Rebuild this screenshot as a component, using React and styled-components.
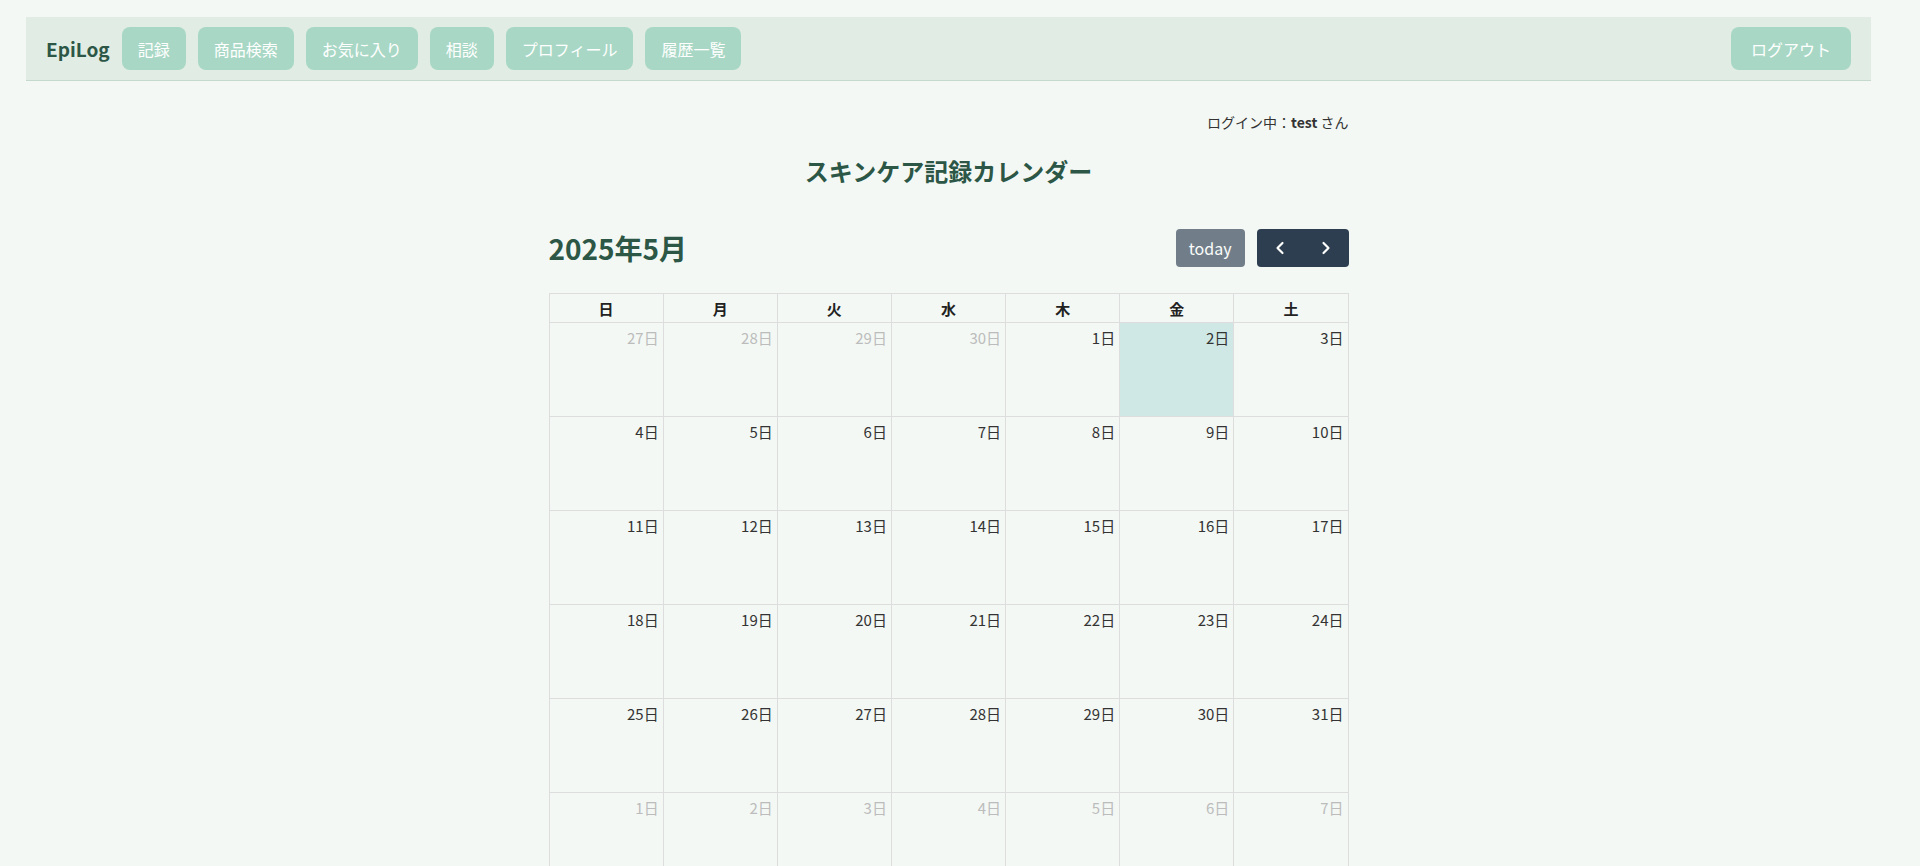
import React from "react";
import styled, { createGlobalStyle } from "styled-components";
import { ChevronLeft, ChevronRight } from "lucide-react";

const GlobalStyle = createGlobalStyle`
  html, body {
    margin: 0;
    padding: 0;
    background: #f3f8f4;
  }
  body {
    font-family: "Noto Sans CJK JP", "Noto Sans", sans-serif;
    color: #333;
  }
`

const Page = styled.div`
  padding: 17px 0 0 26px;
`

const Shell = styled.div`
  width: 1845px;
`

const Nav = styled.nav`
  height: 63px;
  display: flex;
  align-items: center;
  gap: 12px;
  padding: 0 20px;
  background: #e0ece4;
  border-bottom: 1px solid #c6d9cf;
`

const Logo = styled.div`
  font-size: 19px;
  font-weight: 700;
  color: #2c5645;
`

const NavButton = styled.button`
  font-family: inherit;
  font-size: 16px;
  line-height: 24px;
  padding: 9.5px ${(p) => (p.$push ? "20px" : "16px")};
  border: none;
  border-radius: 8px;
  background: #a8d8c5;
  color: #fff;
  cursor: pointer;
  margin-left: ${(p) => (p.$push ? "auto" : "0")};
`

const Main = styled.main`
  width: 800px;
  margin: 0 auto;
  padding-top: 31px;
`

const LoginInfo = styled.div`
  text-align: right;
  font-size: 14px;
  line-height: 20px;
  color: #333;

  b {
    font-weight: 700;
  }
`

const PageTitle = styled.h2`
  margin: 21px 0 0;
  text-align: center;
  font-size: 24px;
  line-height: 36px;
  font-weight: 700;
  color: #2c5645;
`

const Toolbar = styled.div`
  margin-top: 40px;
  height: 38px;
  display: flex;
  align-items: center;
  justify-content: space-between;
`

const MonthTitle = styled.h3`
  margin: 0;
  font-size: 28px;
  font-weight: 700;
  color: #2c5645;
  line-height: 38px;
`

const Controls = styled.div`
  display: flex;
  gap: 12px;
`

const TodayButton = styled.button`
  font-family: inherit;
  font-size: 16px;
  height: 38px;
  padding: 0 13px;
  border: none;
  border-radius: 4px;
  background: #2c3e50;
  color: #fff;
  opacity: 0.65;
`

const ButtonGroup = styled.div`
  display: flex;
  border-radius: 4px;
  overflow: hidden;
  background: #2c3e50;
`

const ArrowButton = styled.button`
  width: 46px;
  height: 38px;
  border: none;
  background: transparent;
  color: #fff;
  display: flex;
  align-items: center;
  justify-content: center;
  padding: 0;
`

const Table = styled.table`
  margin-top: 26px;
  width: 100%;
  border-collapse: collapse;
  table-layout: fixed;
`

const HeadCell = styled.th`
  height: 28px;
  padding: 0;
  border: 1px solid #ddd;
  font-size: 15px;
  font-weight: 700;
  color: #222;
  text-align: center;
`

const DayCell = styled.td`
  height: 89px;
  padding: 4px 4px 0 0;
  border: 1px solid #ddd;
  vertical-align: top;
  text-align: right;
  font-size: 15px;
  line-height: 22px;
  color: ${(p) => (p.$other ? "#bcbcbc" : "#333")};
  background: ${(p) => (p.$today ? "#cfe8e5" : "transparent")};
`

const weekdays = ["日", "月", "火", "水", "木", "金", "土"];
const navItems = ["記録", "商品検索", "お気に入り", "相談", "プロフィール", "履歴一覧"];

const buildDays = () => {
  const days = [];
  [27, 28, 29, 30].forEach((d) => days.push({ d, other: true }));
  for (let d = 1; d <= 31; d++) days.push({ d, other: false, today: d === 2 });
  for (let d = 1; d <= 7; d++) days.push({ d, other: true });
  const weeks = [];
  for (let i = 0; i < days.length; i += 7) weeks.push(days.slice(i, i + 7));
  return weeks;
};

export default function App() {
  const weeks = buildDays();
  return (
    <Page>
      <GlobalStyle />
      <Shell>
        <Nav>
          <Logo>EpiLog</Logo>
          {navItems.map((item) => (
            <NavButton key={item}>{item}</NavButton>
          ))}
          <NavButton $push>ログアウト</NavButton>
        </Nav>
        <Main>
          <LoginInfo>
            ログイン中：<b>test</b> さん
          </LoginInfo>
          <PageTitle>スキンケア記録カレンダー</PageTitle>
          <Toolbar>
            <MonthTitle>2025年5月</MonthTitle>
            <Controls>
              <TodayButton>today</TodayButton>
              <ButtonGroup>
                <ArrowButton>
                  <ChevronLeft size={20} strokeWidth={2.6} />
                </ArrowButton>
                <ArrowButton>
                  <ChevronRight size={20} strokeWidth={2.6} />
                </ArrowButton>
              </ButtonGroup>
            </Controls>
          </Toolbar>
          <Table>
            <thead>
              <tr>
                {weekdays.map((w) => (
                  <HeadCell key={w}>{w}</HeadCell>
                ))}
              </tr>
            </thead>
            <tbody>
              {weeks.map((week, i) => (
                <tr key={i}>
                  {week.map((day, j) => (
                    <DayCell key={j} $other={day.other} $today={day.today}>
                      {day.d}日
                    </DayCell>
                  ))}
                </tr>
              ))}
            </tbody>
          </Table>
        </Main>
      </Shell>
    </Page>
  );
}
